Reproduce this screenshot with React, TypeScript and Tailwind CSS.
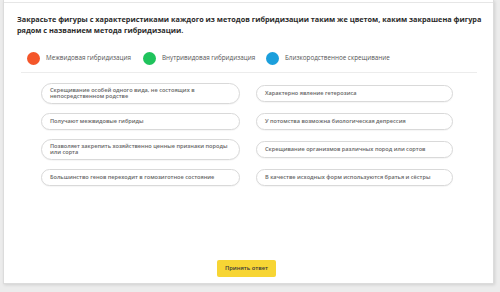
import { Fragment } from 'react';

const legend = [
  { label: 'Межвидовая гибридизация', color: '#f4562a', w: 'w-[116px]' },
  { label: 'Внутривидовая гибридизация', color: '#1fc35c', w: 'w-[123px]' },
  { label: 'Близкородственное скрещивание', color: '#1b9fdc', w: 'w-auto' },
];

const rows = [
  ['Скрещивание особей одного вида, не состоящих в непосредственном родстве', 'Характерно явление гетерозиса'],
  ['Получают межвидовые гибриды', 'У потомства возможна биологическая депрессия'],
  ['Позволяет закрепить хозяйственно ценные признаки породы или сорта', 'Скрещивание организмов различных пород или сортов'],
  ['Большинство генов переходит в гомозиготное состояние', 'В качестве исходных форм используются братья и сёстры'],
];

function Pill({ text }: { text: string }) {
  return (
    <div className="min-h-[17px] py-[3px] flex items-center rounded-full border border-[#d9d9d9] bg-white pl-[8px] pr-[8px] shadow-[0_1px_1px_rgba(0,0,0,0.04)]">
      <span className="text-[5.6px] leading-[6.5px] font-semibold text-[#666]">{text}</span>
    </div>
  );
}

export default function App() {
  return (
    <div
      className="w-[500px] h-[292px] bg-[#ececec] overflow-hidden"
      style={{ fontFamily: '"Open Sans", "Noto Sans", sans-serif' }}
    >
      <div className="ml-[3px] w-[491px] h-[284px] bg-white border-x border-b border-[#dcdcdc] shadow-[1px_1px_3px_rgba(0,0,0,0.12)] flex flex-col">
        <div className="h-[3px] border-b border-[#e6e6e6]" />
        <p className="mt-[11px] pl-[13px] pr-[8px] text-[7.3px] leading-[11px] font-bold text-[#2b2b2b]">
          Закрасьте фигуры с характеристиками каждого из методов гибридизации таким же цветом, каким закрашена фигура рядом с названием метода гибридизации.
        </p>
        <div className="mt-[15px] pl-[23px] flex items-center h-[14px]">
          {legend.map((l) => (
            <div key={l.label} className={`flex items-center gap-[6px] ${l.w}`}>
              <div className="w-[13px] h-[13px] rounded-full" style={{ backgroundColor: l.color }} />
              <span className="text-[6.3px] text-[#555]">{l.label}</span>
            </div>
          ))}
        </div>
        <div className="mt-[7px] mx-[17px] mr-[16px] h-px bg-[#ececec]" />
        <div className="mt-[6px] ml-[37px] grid grid-cols-[199px_197px] gap-x-[16px] auto-rows-[28px]">
          {rows.map(([a, b]) => (
            <Fragment key={a}>
              <div className="flex flex-col justify-center">
                <Pill text={a} />
              </div>
              <div className="flex flex-col justify-center">
                <Pill text={b} />
              </div>
            </Fragment>
          ))}
        </div>
        <div className="flex-1" />
        <div className="flex justify-center mb-[6px] pr-[4px]">
          <button className="w-[59px] h-[17px] bg-[#f7d534] rounded-[2px] text-[5.8px] font-semibold text-[#3a3a3a]">
            Принять ответ
          </button>
        </div>
      </div>
    </div>
  );
}
